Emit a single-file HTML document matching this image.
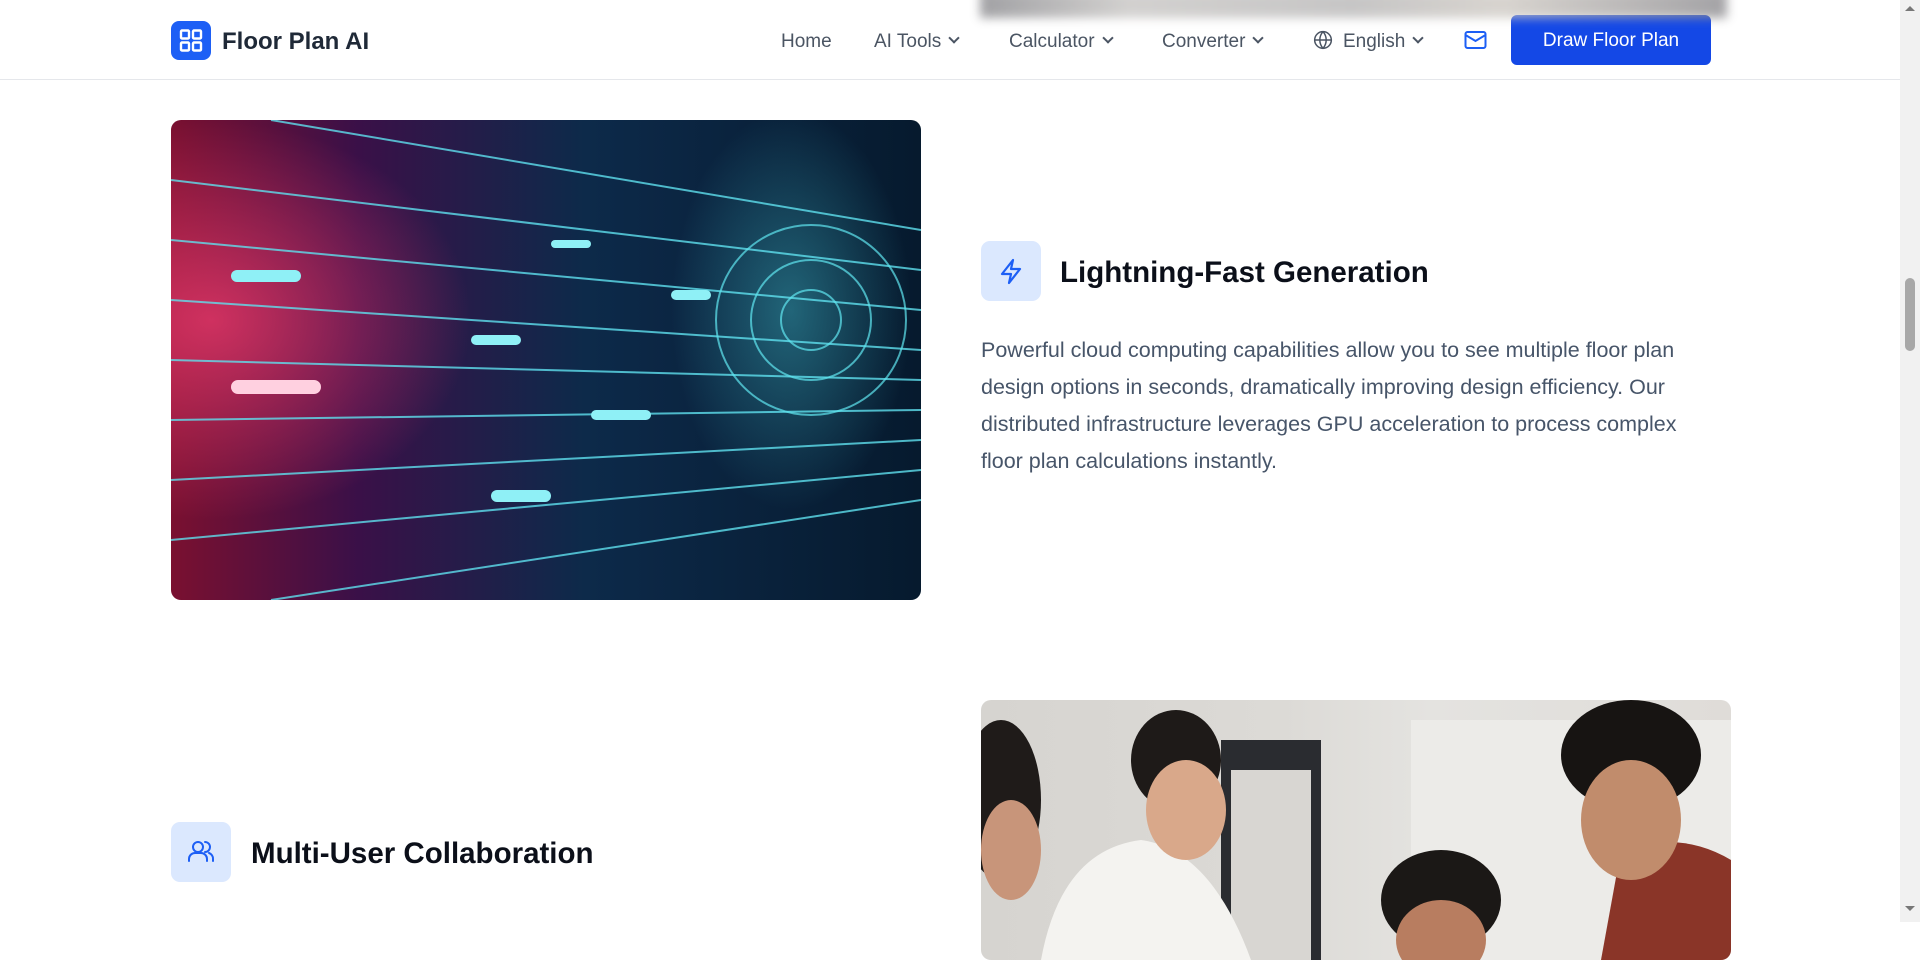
<!DOCTYPE html>
<html><head><meta charset="utf-8"><style>
*{margin:0;padding:0;box-sizing:border-box}
html,body{width:1920px;height:922px;overflow:hidden;background:#fff;font-family:"Liberation Sans",sans-serif}
.hdr{position:absolute;left:0;top:0;width:1900px;height:80px;background:#fff;border-bottom:1px solid #e5e7eb;z-index:5}
.blur{position:absolute;left:980px;top:-10px;width:747px;height:28px;background:linear-gradient(90deg,#8a8a8e,#c8c6c4 20%,#b9b8b8 50%,#cfcac4 70%,#8d8c90);filter:blur(5px);z-index:6;opacity:.8}
.logo{position:absolute;left:171px;top:21px;width:40px;height:39px;background:#1d5ff5;border-radius:8px}
.brand{position:absolute;left:222px;top:28px;font-size:24px;font-weight:bold;color:#1f2937}
.nav{position:absolute;top:31px;font-size:19px;color:#4b5563}
.chev{display:inline-block;width:8px;height:8px;border-right:2px solid #4b5563;border-bottom:2px solid #4b5563;transform:rotate(45deg);margin-left:9px;position:relative;top:-5px}
.btn{position:absolute;left:1511px;top:15px;width:200px;height:50px;background:#1448e6;border-radius:6px;color:#fff;font-size:19px;text-align:center;line-height:52px}
.img1{position:absolute;left:171px;top:120px;width:750px;height:480px;border-radius:10px;overflow:hidden;background:
radial-gradient(ellipse 120px 200px at 620px 190px,rgba(80,230,240,.35),transparent),
radial-gradient(ellipse 260px 200px at 40px 200px,rgba(240,60,110,.75),transparent),
linear-gradient(90deg,#7a1030 0%,#3a1048 25%,#0d2a4a 55%,#061a2e 100%)}
.icbox{position:absolute;width:60px;height:60px;background:#dbe8fe;border-radius:9px}
.h{position:absolute;font-size:29.5px;font-weight:bold;color:#0b0f19}
.p{position:absolute;left:981px;top:332px;width:735px;font-size:21.5px;line-height:37px;color:#475569}
.img2{position:absolute;left:981px;top:700px;width:750px;height:260px;border-radius:10px;overflow:hidden;background:linear-gradient(90deg,#d6d4d0,#dcdad6 40%,#e4e3e0 60%,#dfdcd8)}
.sb{position:absolute;left:1900px;top:0;width:20px;height:922px;background:#f1f1f1}
</style></head><body>
<div class="blur"></div>
<div class="hdr">
<div class="logo"><svg width="40" height="39" viewBox="0 0 40 39"><g fill="none" stroke="#fff" stroke-width="2.4"><rect x="10" y="9.5" width="8" height="8" rx="1"/><rect x="22" y="9.5" width="8" height="8" rx="1"/><rect x="10" y="21.5" width="8" height="8" rx="1"/><rect x="22" y="21.5" width="8" height="8" rx="1"/></g></svg></div>
<div class="brand">Floor Plan AI</div>
<div class="nav" style="left:781px">Home</div>
<div class="nav" style="left:874px">AI Tools<span class="chev"></span></div>
<div class="nav" style="left:1009px">Calculator<span class="chev"></span></div>
<div class="nav" style="left:1162px">Converter<span class="chev"></span></div>
<svg style="position:absolute;left:1313px;top:30px" width="20" height="20" viewBox="0 0 24 24" fill="none" stroke="#4b5563" stroke-width="1.8"><circle cx="12" cy="12" r="10"/><path d="M2 12h20M12 2a15 15 0 0 1 0 20M12 2a15 15 0 0 0 0 20"/></svg>
<div class="nav" style="left:1343px">English<span class="chev"></span></div>
<svg style="position:absolute;left:1463px;top:28px" width="25" height="24" viewBox="0 0 24 24" fill="none" stroke="#1d5ff5" stroke-width="2"><rect x="2" y="4" width="20" height="16" rx="2"/><path d="M2 7l10 6 10-6"/></svg>
<div class="btn">Draw Floor Plan</div>
</div>
<div class="img1"><svg width="750" height="480">
<g stroke="#5fe0ee" stroke-width="2" opacity=".8">
<line x1="0" y1="60" x2="750" y2="150"/><line x1="0" y1="120" x2="750" y2="190"/><line x1="0" y1="180" x2="750" y2="230"/><line x1="0" y1="240" x2="750" y2="260"/><line x1="0" y1="300" x2="750" y2="290"/><line x1="0" y1="360" x2="750" y2="320"/><line x1="0" y1="420" x2="750" y2="350"/><line x1="100" y1="480" x2="750" y2="380"/><line x1="100" y1="0" x2="750" y2="110"/>
</g>
<g fill="#8ff0f6"><rect x="60" y="150" width="70" height="12" rx="6"/><rect x="300" y="215" width="50" height="10" rx="5"/><rect x="420" y="290" width="60" height="10" rx="5"/><rect x="320" y="370" width="60" height="12" rx="6"/><rect x="500" y="170" width="40" height="10" rx="5"/><rect x="60" y="260" width="90" height="14" rx="7" fill="#ffd0e0"/><rect x="380" y="120" width="40" height="8" rx="4"/></g>
<g fill="none" stroke="#60e6f0" stroke-width="2" opacity=".7"><circle cx="640" cy="200" r="60"/><circle cx="640" cy="200" r="95"/><circle cx="640" cy="200" r="30"/></g>
</svg></div>
<div class="icbox" style="left:981px;top:241px"><svg width="60" height="60" viewBox="0 0 60 60" fill="none" stroke="#1d5ff5" stroke-width="2.2" stroke-linejoin="round"><path d="M32 19L21 33h9l-2 9 11-14h-9z"/></svg></div>
<div class="h" style="left:1060px;top:256px">Lightning-Fast Generation</div>
<div class="p">Powerful cloud computing capabilities allow you to see multiple floor plan design options in seconds, dramatically improving design efficiency. Our distributed infrastructure leverages GPU acceleration to process complex floor plan calculations instantly.</div>
<div class="img2"><svg width="750" height="260">
<rect x="240" y="40" width="100" height="220" fill="#2a2c30"/><rect x="250" y="70" width="80" height="190" fill="#d8d6d2"/>
<rect x="430" y="20" width="320" height="240" fill="#ecebe8"/>
<path d="M60 260 Q80 150 160 140 Q230 150 270 260Z" fill="#f4f3f0"/>
<ellipse cx="195" cy="60" rx="45" ry="50" fill="#1e1a18"/><ellipse cx="205" cy="110" rx="40" ry="50" fill="#d9a88a"/>
<ellipse cx="20" cy="100" rx="40" ry="80" fill="#1f1b19"/><ellipse cx="30" cy="150" rx="30" ry="50" fill="#c8957a"/>
<ellipse cx="460" cy="200" rx="60" ry="50" fill="#1b1816"/><ellipse cx="460" cy="240" rx="45" ry="40" fill="#b87d60"/>
<path d="M620 260 L640 150 Q700 130 750 160 L750 260Z" fill="#8a3528"/>
<ellipse cx="650" cy="55" rx="70" ry="55" fill="#171412"/><ellipse cx="650" cy="120" rx="50" ry="60" fill="#c18c6c"/>
</svg></div>
<div class="icbox" style="left:171px;top:822px"><svg width="60" height="60" viewBox="0 0 60 60" fill="none" stroke="#1d5ff5" stroke-width="2" stroke-linecap="round"><circle cx="27" cy="25" r="5"/><path d="M18 39v-2a6 6 0 0 1 6-6h6a6 6 0 0 1 6 6v2M34 20a5 5 0 0 1 0 10M38 31a6 6 0 0 1 4 6v2"/></svg></div>
<div class="h" style="left:251px;top:837px">Multi-User Collaboration</div>
<div class="sb"><div style="position:absolute;left:5px;top:278px;width:10px;height:73px;background:#a8a8a8;border-radius:5px"></div>
<div style="position:absolute;left:5px;top:6px;border:5px solid transparent;border-bottom-color:#777;border-top:0"></div>
<div style="position:absolute;left:5px;top:906px;border:5px solid transparent;border-top-color:#777;border-bottom:0"></div></div>
</body></html>
